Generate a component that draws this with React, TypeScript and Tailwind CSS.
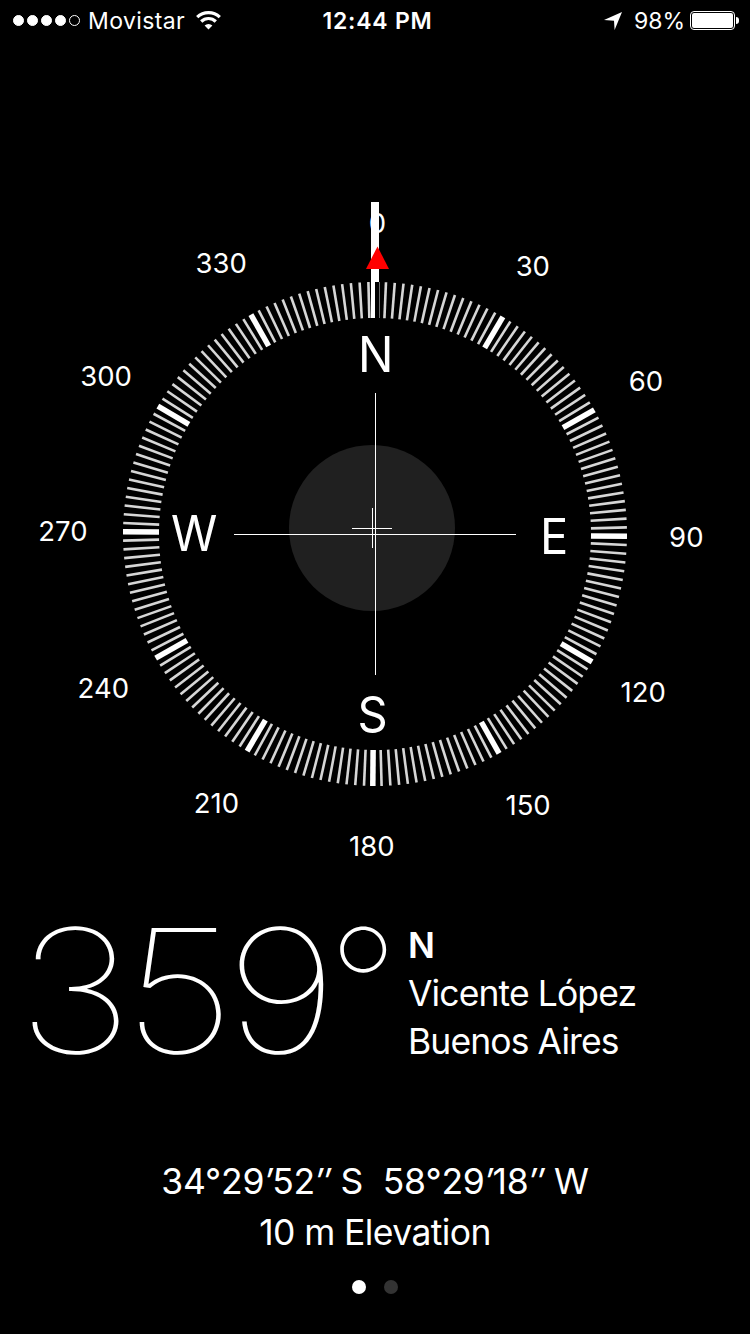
import * as React from "react";
import { clsx } from "clsx";

const CENTER = { x: 375, y: 534 };
// The dial sits half a degree off, the heading is 359.5°
const DIAL_OFFSET = 0.5;

const ticks = Array.from({ length: 180 }, (_, i) => i * 2);

const degreeLabels = Array.from({ length: 12 }, (_, i) => i * 30);

const cardinals = [
  { label: "N", angle: 0 },
  { label: "E", angle: 90 },
  { label: "S", angle: 180 },
  { label: "W", angle: 270 },
];

const polar = (angle: number, radius: number) => {
  const rad = ((angle + DIAL_OFFSET) * Math.PI) / 180;
  return {
    x: CENTER.x + radius * Math.sin(rad),
    y: CENTER.y - radius * Math.cos(rad),
  };
};

const SignalDots = ({ strength }: { strength: number }) => (
  <div className="flex gap-[3px]">
    {[1, 2, 3, 4, 5].map((n) => (
      <span
        key={n}
        className={clsx("size-[11px] rounded-full border border-white", n <= strength && "bg-white")}
      />
    ))}
  </div>
);

const WifiIcon = (props: React.SVGProps<SVGSVGElement>) => (
  <svg width="25" height="19" viewBox="0 0 25 19" fill="none" {...props}>
    <path d="M1.2 6.2A16.2 16.2 0 0 1 23.8 6.2" stroke="white" strokeWidth="3.2" />
    <path d="M5.2 10.5A10.4 10.4 0 0 1 19.8 10.5" stroke="white" strokeWidth="3.2" />
    <path d="M12.5 18.6L8.6 14.5A5.6 5.6 0 0 1 16.4 14.5Z" fill="white" />
  </svg>
);

const LocationIcon = (props: React.SVGProps<SVGSVGElement>) => (
  <svg width="18" height="18" viewBox="0 0 18 18" {...props}>
    <path d="M18 0L10.6 18L10 8.8L0 8Z" fill="white" />
  </svg>
);

const Battery = () => (
  <div className="flex items-center gap-px">
    <div className="h-[19px] w-[45px] rounded-[4px] border border-white p-px">
      <div className="h-full rounded-[2px] bg-white" />
    </div>
    <div className="h-[7px] w-[3px] rounded-r-full bg-white" />
  </div>
);

const StatusBar = () => (
  <header className="grid h-[41px] grid-cols-3 items-center pl-[13px] pr-[11px] text-[23px] leading-none">
    <div className="flex items-center">
      <SignalDots strength={4} />
      <span className="ml-2 pt-0.5 tracking-[0.4px]">Movistar</span>
      <WifiIcon className="ml-[11px]" />
    </div>
    <span className="pl-[3px] pt-0.5 text-center font-semibold tracking-[0.75px]">12:44 PM</span>
    <div className="flex items-center justify-end">
      <LocationIcon className="mr-3" />
      <span className="mr-[5px] pt-0.5">98%</span>
      <Battery />
    </div>
  </header>
);

const Compass = () => (
  <svg className="block" width="750" height="840" viewBox="0 41 750 840" fill="white">
    {/* Bubble level */}
    <circle cx="372" cy="528" r="83" fill="#202020" />
    <g shapeRendering="crispEdges">
      <rect x="352" y="528" width="40" height="1" />
      <rect x="372" y="508" width="1" height="40" />
      <rect x="234" y="534" width="282" height="1" />
      <rect x="375" y="393" width="1" height="282" />
    </g>

    {/* Dial */}
    {ticks.map((angle) => {
      const major = angle % 30 === 0;
      const from = polar(angle, 216);
      const to = polar(angle, 252);
      return (
        <line
          key={angle}
          x1={from.x}
          y1={from.y}
          x2={to.x}
          y2={to.y}
          stroke={major ? "white" : "#d6d6d6"}
          strokeWidth={major ? 5.5 : 2.6}
        />
      );
    })}

    {degreeLabels.map((angle) => {
      const { x, y } = polar(angle, 311.7);
      return (
        <text key={angle} x={x - 0.4} y={y + 10.2} fontSize="27.5" textAnchor="middle">
          {angle}
        </text>
      );
    })}

    {cardinals.map(({ label, angle }) => {
      const { x, y } = polar(angle, 180);
      return (
        <text
          key={label}
          transform={`translate(${x - 0.8} ${y + 18.3}) scale(0.96 1)`}
          fontSize="49"
          textAnchor="middle"
        >
          {label}
        </text>
      );
    })}

    {/* Heading marker, inverted where it crosses the dial */}
    <g shapeRendering="crispEdges">
      <rect x="371" y="202" width="8" height="80" />
      <rect x="375" y="282" width="5" height="37" fill="black" />
      <rect x="371" y="282" width="4" height="36" />
      <rect x="379" y="282" width="1" height="36" fill="#6b6b6b" />
    </g>
    <path d="M377.5 246.5L389 269H366Z" fill="#ff0000" />
  </svg>
);

const Heading = () => (
  <section className="flex h-[220px] items-start pl-[17px] pt-[20px]">
    <div className="flex w-[391px] items-start">
      <span className="w-[311px] origin-left scale-x-[1.16] text-[171.5px] font-[120] leading-[180px] tracking-[-8.5px]">
        359
      </span>
      <span className="text-[155px] font-[130] leading-[168px]">°</span>
    </div>
    <div className="pt-[21px] text-[35.5px] leading-[48px] tracking-[-0.9px]">
      <p className="font-semibold">N</p>
      <p>Vicente López</p>
      <p>Buenos Aires</p>
    </div>
  </section>
);

const Location = () => (
  <section className="mt-[55px] text-center text-[35.5px] leading-[51px]">
    <p className="whitespace-pre tracking-[-0.17px]">
      34°29<i>′</i>52<i>″</i> S{"  "}58°29<i>′</i>18<i>″</i> W
    </p>
    <p className="tracking-[-0.6px]">10 m Elevation</p>
  </section>
);

const PageDots = () => (
  <div className="mt-[22px] flex justify-center gap-[18px]">
    <span className="size-[14px] rounded-full bg-white" />
    <span className="size-[14px] rounded-full bg-[#333333]" />
  </div>
);

export default function App() {
  return (
    <main className="h-[1334px] w-[750px] overflow-hidden bg-black font-[Inter,sans-serif] text-white">
      <StatusBar />
      <Compass />
      <Heading />
      <Location />
      <PageDots />
    </main>
  );
}
